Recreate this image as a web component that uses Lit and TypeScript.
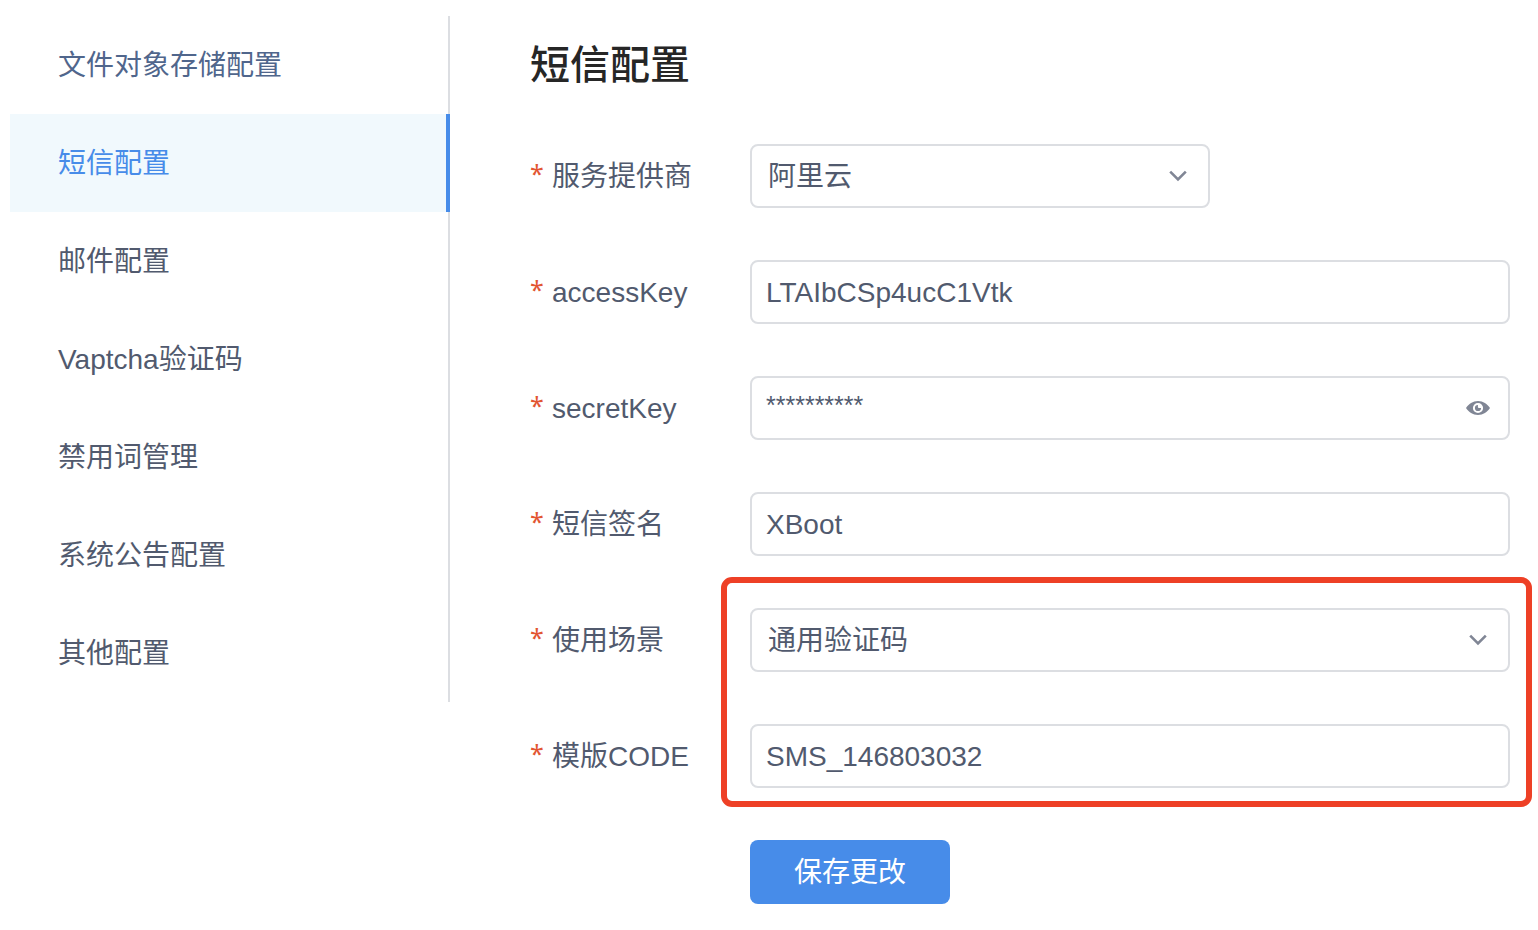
import { LitElement, html, css, nothing } from "lit";
import { customElement, state } from "lit/decorators.js";
import { classMap } from "lit/directives/class-map.js";

interface NavItem {
  id: string;
  label: string;
  visited?: boolean;
}

const NAV: NavItem[] = [
  { id: "oss", label: "文件对象存储配置", visited: true },
  { id: "sms", label: "短信配置" },
  { id: "email", label: "邮件配置" },
  { id: "vaptcha", label: "Vaptcha验证码" },
  { id: "stopword", label: "禁用词管理" },
  { id: "notice", label: "系统公告配置" },
  { id: "other", label: "其他配置" },
];

@customElement("app-root")
export class AppRoot extends LitElement {
  @state() private active = "sms";

  static styles = css`
    :host {
      display: block;
      background: #fff;
      color: #515a6e;
      font-family: "Liberation Sans", "Noto Sans CJK SC", sans-serif;
      font-size: 28px;
      line-height: 42px;
    }
    * {
      box-sizing: border-box;
    }
    .layout {
      display: flex;
      align-items: flex-start;
      padding: 16px 28px 26px 10px;
    }
    .nav {
      flex: 0 0 440px;
      box-shadow: inset -2px 0 #dcdee2;
    }
    .item {
      display: block;
      padding: 29px 48px 27px;
      color: #515a6e;
      text-decoration: none;
    }
    .item.visited {
      color: #50668c;
    }
    .item.active {
      color: #478ce9;
      background: #f1f9fd;
      border-right: 4px solid #478ce9;
    }
    .content {
      flex: 1;
      min-width: 0;
      padding-left: 80px;
    }
    .title {
      margin: 0 0 48px;
      padding-top: 18px;
      font-size: 40px;
      line-height: 62px;
      font-weight: 500;
      color: #262626;
    }
    .form,
    .scene {
      display: flex;
      flex-direction: column;
      gap: 52px;
    }
    .scene {
      position: relative;
    }
    .scene::after {
      content: "";
      position: absolute;
      inset: -31px -22px -19px 191px;
      border: 6px solid #ee4026;
      border-radius: 11px;
      pointer-events: none;
    }
    .row {
      display: grid;
      grid-template-columns: 220px minmax(0, 1fr);
      align-items: center;
    }
    .label {
      display: flex;
      align-items: center;
      padding-top: 2px;
    }
    .star {
      width: 14px;
      margin-right: 8px;
      padding-bottom: 8px;
      color: #e25532;
      font-family: "Noto Sans", sans-serif;
      font-size: 25px;
      line-height: 34px;
      text-align: center;
    }
    .control {
      position: relative;
    }
    .control.short {
      max-width: 460px;
    }
    .box {
      display: block;
      width: 100%;
      height: 64px;
      margin: 0;
      padding: 2px 14px 0;
      border: 2px solid #dcdee2;
      border-radius: 8px;
      background: #fff;
      color: #515a6e;
      font: inherit;
      appearance: none;
      outline: none;
    }
    select.box {
      padding: 2px 60px 0 16px;
    }
    .box.secret {
      padding: 0 60px 6px 14px;
      font-size: 25px;
    }
    .icon {
      position: absolute;
      top: 20px;
      right: 20px;
      width: 24px;
      height: 24px;
      color: #808695;
      pointer-events: none;
    }
    .icon svg {
      display: block;
      width: 24px;
      height: 24px;
    }
    .reveal {
      padding: 0;
      border: 0;
      background: none;
      pointer-events: auto;
      cursor: pointer;
    }
    .save {
      width: 200px;
      height: 64px;
      margin-left: 220px;
      padding: 2px 0 0;
      border: 0;
      border-radius: 8px;
      background: #478ce9;
      color: #fff;
      font: inherit;
      cursor: pointer;
    }
  `;

  private label(id: string, text: string) {
    return html`<label class="label" for=${id}
      ><span class="star">*</span><span>${text}</span></label
    >`;
  }

  private selectRow(id: string, text: string, value: string, short = false) {
    return html`<div class="row">
      ${this.label(id, text)}
      <div class=${classMap({ control: true, short })}>
        <select class="box" id=${id}>
          <option>${value}</option>
        </select>
        <span class="icon">
          <svg viewBox="0 0 24 24" fill="none" stroke="currentColor" stroke-width="2.6">
            <path d="M4.2 7.6 12 15.4 19.8 7.6" />
          </svg>
        </span>
      </div>
    </div>`;
  }

  private inputRow(id: string, text: string, value: string, secret = false) {
    return html`<div class="row">
      ${this.label(id, text)}
      <div class="control">
        <input
          class=${classMap({ box: true, secret })}
          id=${id}
          type="text"
          autocomplete="off"
          .value=${value}
        />
        ${secret
          ? html`<button class="icon reveal" type="button" aria-label="显示">
              <svg viewBox="0 0 24 24">
                <path
                  fill="currentColor"
                  fill-rule="evenodd"
                  d="M12 5C6.800 5 2.700 8 0 12c2.700 4 6.800 7 12 7s9.300-3 12-7c-2.700-4-6.800-7-12-7Zm0 1.900a5.100 5.100 0 1 1 0 10.200 5.100 5.100 0 0 1 0-10.200Z"
                />
                <path
                  fill="currentColor"
                  d="M12 8.900a3.100 3.100 0 1 0 3.100 3.100h-2.100a1.100 1.100 0 0 1-1.100-1.100Z"
                />
              </svg>
            </button>`
          : nothing}
      </div>
    </div>`;
  }

  render() {
    return html`<div class="layout">
      <nav class="nav">
        ${NAV.map(
          (n) => html`<a
            class=${classMap({
              item: true,
              active: n.id === this.active,
              visited: !!n.visited && n.id !== this.active,
            })}
            href="#${n.id}"
            @click=${() => (this.active = n.id)}
            >${n.label}</a
          >`,
        )}
      </nav>
      <main class="content">
        <h1 class="title">短信配置</h1>
        <form class="form" @submit=${(e: Event) => e.preventDefault()}>
          ${this.selectRow("provider", "服务提供商", "阿里云", true)}
          ${this.inputRow("accessKey", "accessKey", "LTAIbCSp4ucC1Vtk")}
          ${this.inputRow("secretKey", "secretKey", "**********", true)}
          ${this.inputRow("sign", "短信签名", "XBoot")}
          <div class="scene">
            ${this.selectRow("type", "使用场景", "通用验证码")}
            ${this.inputRow("template", "模版CODE", "SMS_146803032")}
          </div>
          <button class="save" type="submit">保存更改</button>
        </form>
      </main>
    </div>`;
  }
}
